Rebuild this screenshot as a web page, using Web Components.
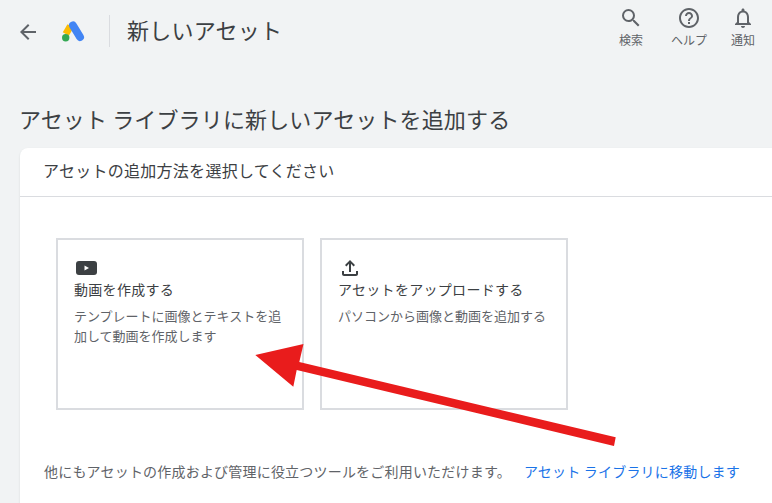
<!DOCTYPE html>
<html lang="ja"><head><meta charset="utf-8"><title>新しいアセット</title>
<style>
html,body{margin:0;padding:0;height:503px;width:772px;overflow:hidden;background:#f1f3f4;font-family:"Noto Sans CJK JP","Liberation Sans",sans-serif;}
</style></head><body>
<ads-page>
  <ads-header slot="header" title-text="新しいアセット">
    <ads-action label="検索" icon="search"></ads-action>
    <ads-action label="ヘルプ" icon="help"></ads-action>
    <ads-action label="通知" icon="bell"></ads-action>
  </ads-header>
  <ads-card heading="アセット ライブラリに新しいアセットを追加する" sub="アセットの追加方法を選択してください">
    <ads-tile icon="video" name="動画を作成する">テンプレートに画像とテキストを追加して動画を作成します</ads-tile>
    <ads-tile icon="upload" name="アセットをアップロードする">パソコンから画像と動画を追加する</ads-tile>
    <span slot="foot">他にもアセットの作成および管理に役立つツールをご利用いただけます。</span>
    <a slot="link" href="#">アセット ライブラリに移動します</a>
  </ads-card>
</ads-page>
<script>
const ICONS={
 search:'<path d="M15.500 14h-.790l-.280-.270A6.470 6.470 0 0 0 16 9.500 6.500 6.500 0 1 0 9.500 16c1.610 0 3.090-.590 4.230-1.570l.270.280v.790l5 4.990L20.490 19l-4.990-5zm-6 0C7.010 14 5 11.990 5 9.500S7.010 5 9.500 5 14 7.010 14 9.500 11.990 14 9.500 14z"/>',
 help:'<path d="M11 18h2v-2h-2v2zm1-16C6.480 2 2 6.480 2 12s4.480 10 10 10 10-4.480 10-10S17.520 2 12 2zm0 18c-4.410 0-8-3.590-8-8s3.590-8 8-8 8 3.590 8 8-3.590 8-8 8zm0-14c-2.210 0-4 1.790-4 4h2c0-1.100.9-2 2-2s2 .9 2 2c0 2-3 1.750-3 5h2c0-2.250 3-2.500 3-5 0-2.210-1.790-4-4-4z"/>',
 bell:'<path d="M12 22c1.100 0 2-.9 2-2h-4c0 1.100.9 2 2 2zm6-6v-5c0-3.070-1.630-5.640-4.500-6.320V4c0-.830-.670-1.500-1.500-1.500s-1.500.670-1.500 1.500v.680C7.640 5.360 6 7.920 6 11v5l-2 2v1h16v-1l-2-2zm-2 1H8v-6c0-2.480 1.510-4.500 4-4.500s4 2.020 4 4.500v6z"/>',
 upload:'<path d="M18 15v3H6v-3H4v3c0 1.100.9 2 2 2h12c1.100 0 2-.9 2-2v-3h-2zM7 9l1.410 1.410L11 7.830V16h2V7.830l2.590 2.580L17 9l-5-5-5 5z"/>',
 video:'<rect x="2" y="5" width="21" height="14" rx="3"/><path fill="#fff" d="M10.500 9.500v5l4.500-2.500z"/>'
};
function def(name,html,init){customElements.define(name,class extends HTMLElement{
  constructor(){super();this.attachShadow({mode:'open'}).innerHTML=html;}
  connectedCallback(){init&&init(this,this.shadowRoot);}
});}
def('ads-page',`<style>
:host{display:block;position:relative;width:772px;height:503px;overflow:hidden;color:#202124}
svg{position:absolute;left:0;top:0;pointer-events:none}
</style><slot name="header"></slot><slot></slot>
<svg width="772" height="503" viewBox="0 0 772 503" aria-hidden="true"><polygon fill="#e91c1c" points="255.300,355 303.500,344 299.300,362 615.700,437.300 614,446 296.700,370 293.300,386.700"/></svg>`);
def('ads-header',`<style>
:host{display:flex;align-items:flex-start;height:62px;box-sizing:border-box}
.back{width:24px;height:24px;margin:20px 0 0 16px;fill:#5f6368;flex:none}
.logo{width:26px;height:26px;margin:19px 0 0 20px;flex:none}
.sep{width:1px;height:32px;background:#dadce0;margin:15px 0 0 23px;flex:none}
h1{margin:12px 0 0 17px;font:400 22px/34px "Noto Sans CJK JP",sans-serif;color:#3c4043;flex:1;letter-spacing:.25px}
.acts{display:flex;gap:24px;margin:6px 17px 0 0}
</style>
<svg class="back" viewBox="0 0 24 24"><path d="M20 11H7.830l5.590-5.590L12 4l-8 8 8 8 1.410-1.410L7.830 13H20z"/></svg>
<svg class="logo" viewBox="0 0 26 26">
<path fill="none" stroke="#fbbc04" stroke-width="7" d="M10.500 7 5.800 15"/>
<path fill="none" stroke="#4285f4" stroke-width="8" stroke-linecap="round" d="M13 6.500 20 18"/>
<circle fill="#34a853" cx="5.700" cy="18.700" r="3.700"/></svg>
<div class="sep"></div><h1></h1><div class="acts"><slot></slot></div>`,(h,s)=>{s.querySelector('h1').textContent=h.getAttribute('title-text');});
def('ads-action',`<style>
:host{display:flex;flex-direction:column;align-items:center}
:host(:first-child){margin-right:4px}
svg{width:24px;height:24px;fill:#5f6368}
span{font:400 12px/16px "Noto Sans CJK JP",sans-serif;color:#5f6368;margin-top:2px;white-space:nowrap}
</style><svg viewBox="0 0 24 24"></svg><span></span>`,(h,s)=>{s.querySelector('svg').innerHTML=ICONS[h.getAttribute('icon')];s.querySelector('span').textContent=h.getAttribute('label');});
def('ads-card',`<style>
:host{display:block;padding:0 0 0 20px}
h2{margin:0 0 0 -1px;padding-top:40px;font:400 22px/32px "Noto Sans CJK JP",sans-serif;color:#3c4043;white-space:nowrap;letter-spacing:.14px}
.card{margin-top:14px;width:800px;height:400px;background:#fff;border-radius:8px 0 0 0;box-shadow:0 1px 2px rgba(60,64,67,.15)}
.sub{height:48px;border-bottom:1px solid #dadce0;padding-left:23px;font:400 16px/45px "Noto Sans CJK JP",sans-serif;color:#3c4043;letter-spacing:.27px}
.tiles{display:flex;gap:16px;padding:41px 0 0 36px}
.foot{margin:51px 0 0 24px;font:400 14px/20px "Noto Sans CJK JP",sans-serif;color:#5f6368;display:flex;gap:13px;white-space:nowrap;letter-spacing:.2px}
::slotted(a){color:#1a73e8;text-decoration:none}
</style><h2></h2><div class="card"><div class="sub"></div><div class="tiles"><slot></slot></div>
<div class="foot"><slot name="foot"></slot><slot name="link"></slot></div></div>`,(h,s)=>{s.querySelector('h2').textContent=h.getAttribute('heading');s.querySelector('.sub').textContent=h.getAttribute('sub');});
def('ads-tile',`<style>
:host{display:block;box-sizing:border-box;width:248px;height:172px;border:2px solid #dadce0;background:#fff;padding:16px 16px 0}
svg{display:block;width:24px;height:24px;fill:#3c4043}
.n{font:400 14px/20px "Noto Sans CJK JP",sans-serif;color:#3c4043;margin-top:-1px;letter-spacing:.3px}
.d{font:400 13px/20px "Noto Sans CJK JP",sans-serif;color:#5f6368;margin-top:7px}
</style><svg viewBox="0 0 24 24"></svg><div class="n"></div><div class="d"><slot></slot></div>`,(h,s)=>{s.querySelector('svg').innerHTML=ICONS[h.getAttribute('icon')];s.querySelector('.n').textContent=h.getAttribute('name');});
</script>
</body></html>
